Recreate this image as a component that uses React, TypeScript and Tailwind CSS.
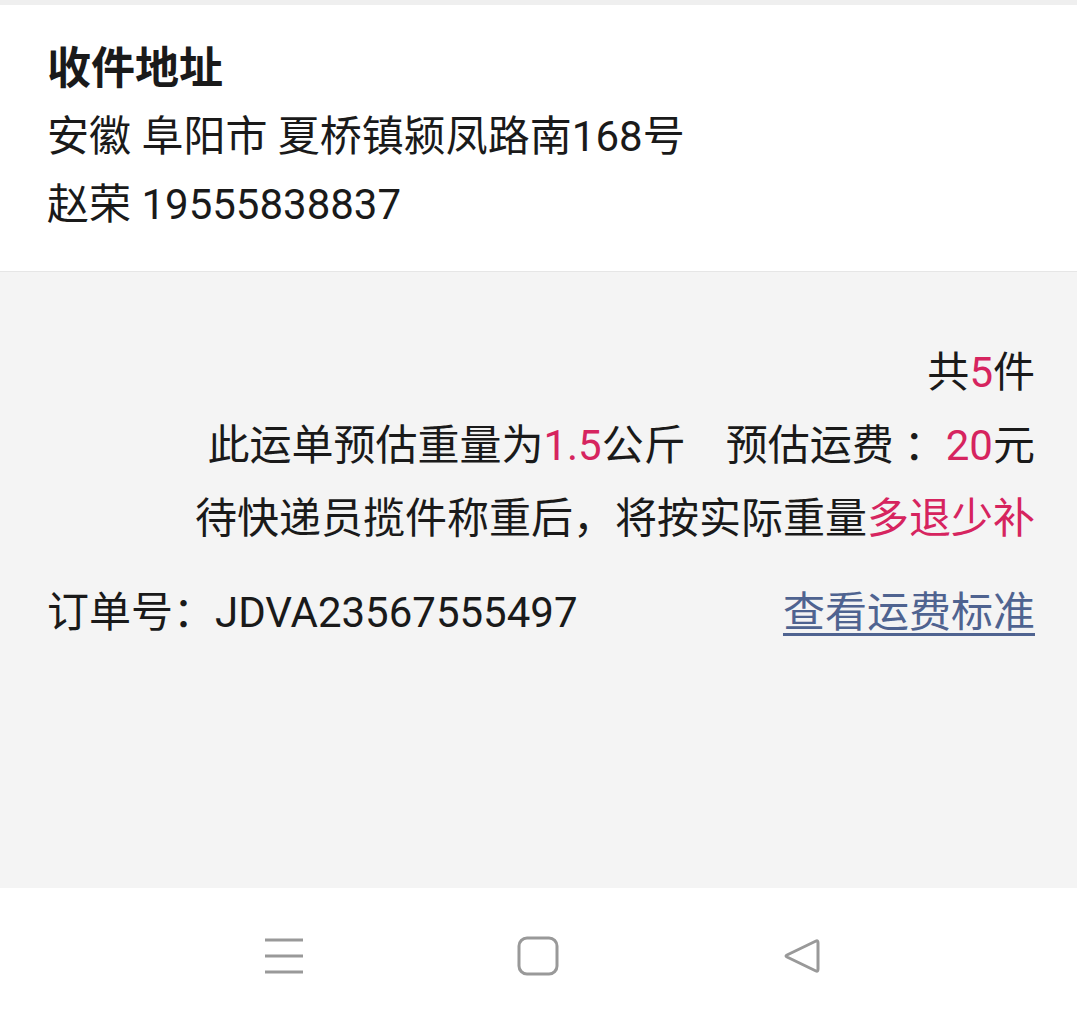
const font = { fontFamily: "Roboto, 'Noto Sans CJK SC', sans-serif" };

function MenuIcon() {
  return (
    <svg width="40" height="38" viewBox="0 0 40 38" fill="none" stroke="#999" strokeWidth="3">
      <line x1="1" y1="3" x2="39" y2="3" />
      <line x1="1" y1="19" x2="39" y2="19" />
      <line x1="1" y1="35" x2="39" y2="35" />
    </svg>
  );
}

function HomeIcon() {
  return (
    <svg width="42" height="40" viewBox="0 0 42 40" fill="none" stroke="#999" strokeWidth="3">
      <rect x="2" y="2" width="38" height="36" rx="8" />
    </svg>
  );
}

function BackIcon() {
  return (
    <svg width="38" height="38" viewBox="0 0 38 38" fill="none" stroke="#999" strokeWidth="3" strokeLinejoin="round">
      <path d="M33 4 Q35 3 35 6 L35 32 Q35 35 33 34 L4 20 Q2 19 4 18 Z" />
    </svg>
  );
}

export default function App() {
  return (
    <div className="flex h-[1021px] w-[1077px] flex-col bg-[#f4f4f4] text-[#1a1a1a]" style={font}>
      <div className="h-[5px] bg-[#efefef]" />
      <section className="border-b border-[#e6e6e6] bg-white pb-[32px] pl-[47px] pt-[30px] text-[42px] leading-[68px]">
        <h1 className="text-[44px] font-bold">收件地址</h1>
        <p>安徽 阜阳市 夏桥镇颍凤路南168号</p>
        <p>赵荣 19555838837</p>
      </section>

      <section className="flex-1 pl-[44px] pr-[42px] pt-[64px] text-[42px] leading-[73px]">
        <div className="text-right">
          <p>
            共<span className="text-[#d6245f]">5</span>件
          </p>
          <p>
            此运单预估重量为<span className="text-[#d6245f]">1.5</span>公斤
            <span className="inline-block w-[40px]" />
            预估运费<span className="ml-[10px]">：</span>
            <span className="text-[#d6245f]">20</span>元
          </p>
          <p>
            待快递员揽件称重后，将按实际重量<span className="text-[#d6245f]">多退少补</span>
          </p>
        </div>
        <div className="mt-[21px] flex items-center justify-between pl-[3px]">
          <span>订单号：JDVA23567555497</span>
          <span className="text-[#4f6390] underline decoration-[3px] underline-offset-[6px]">查看运费标准</span>
        </div>
      </section>

      <nav className="flex h-[133px] items-center bg-white">
        <div className="flex w-full items-center pl-[264px] pt-[2px]">
          <MenuIcon />
          <div className="ml-[213px]">
            <HomeIcon />
          </div>
          <div className="ml-[224px]">
            <BackIcon />
          </div>
        </div>
      </nav>
    </div>
  );
}
